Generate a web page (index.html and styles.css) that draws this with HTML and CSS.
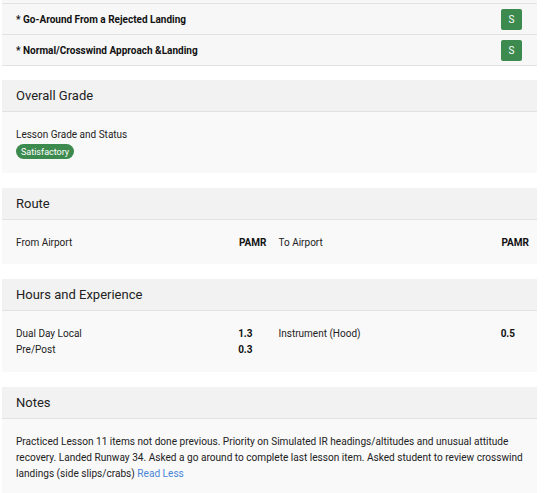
FILE: index.html
```html
<!DOCTYPE html>
<html>
<head>
<meta charset="utf-8">
<link rel="stylesheet" href="styles.css">
</head>
<body>
<div class="page">
  <div class="items">
    <div class="row-tail"></div>
    <div class="item-row">
      <span class="item-name">* Go-Around From a Rejected Landing</span>
      <span class="grade-box">S</span>
    </div>
    <div class="item-row">
      <span class="item-name">* Normal/Crosswind Approach &amp;Landing</span>
      <span class="grade-box">S</span>
    </div>
  </div>

  <section class="card">
    <div class="card-header">Overall Grade</div>
    <div class="card-body body-tall">
      <div class="label">Lesson Grade and Status</div>
      <span class="pill">Satisfactory</span>
    </div>
  </section>

  <section class="card">
    <div class="card-header">Route</div>
    <div class="card-body">
      <div class="grid">
        <div class="pair"><span class="label">From Airport</span><span class="value">PAMR</span></div>
        <div class="pair"><span class="label">To Airport</span><span class="value">PAMR</span></div>
      </div>
    </div>
  </section>

  <section class="card">
    <div class="card-header">Hours and Experience</div>
    <div class="card-body body-tall">
      <div class="grid hours">
        <div class="stack">
          <div class="pair"><span class="label">Dual Day Local</span><span class="value">1.3</span></div>
          <div class="pair"><span class="label">Pre/Post</span><span class="value">0.3</span></div>
        </div>
        <div class="stack">
          <div class="pair"><span class="label">Instrument (Hood)</span><span class="value">0.5</span></div>
        </div>
      </div>
    </div>
  </section>

  <section class="card">
    <div class="card-header">Notes</div>
    <div class="card-body">
      <p class="notes">Practiced Lesson 11 items not done previous. Priority on Simulated IR headings/altitudes and unusual attitude recovery. Landed Runway 34. Asked a go around to complete last lesson item. Asked student to review crosswind landings (side slips/crabs) <a class="link" href="#">Read Less</a></p>
    </div>
  </section>
</div>
</body>
</html>
```

FILE: styles.css
```css
* { box-sizing: border-box; }
html, body {
  margin: 0;
  padding: 0;
  background: #ffffff;
  font-family: Roboto, "Liberation Sans", Arial, sans-serif;
  color: #222222;
}
.page {
  padding: 0 14px 0 2px;
  width: 551px;
}
.items {
  margin-bottom: 14px;
}
.row-tail {
  height: 4px;
  background: #f7f7f7;
  border-bottom: 1px solid #e2e2e2;
}
.item-row {
  display: flex;
  align-items: center;
  justify-content: space-between;
  height: 31px;
  padding: 0 15px 0 14px;
  background: #f7f7f7;
  border-bottom: 1px solid #e2e2e2;
}
.item-name {
  font-size: 10px;
  font-weight: 700;
  color: #111111;
}
.grade-box {
  width: 21px;
  height: 21px;
  display: flex;
  align-items: center;
  justify-content: center;
  background: #3d8a4f;
  color: #ffffff;
  font-size: 10px;
  border-radius: 2px;
}
.card {
  margin-bottom: 15px;
  background: #f9f9f9;
}
.card-header {
  height: 32px;
  display: flex;
  align-items: center;
  padding: 0 14px;
  background: #f2f2f2;
  border-bottom: 1px solid #e2e2e2;
  font-size: 13px;
  color: #222222;
}
.card-body {
  padding: 15px 8px 13px 14px;
  font-size: 10px;
  line-height: 16px;
}
.body-tall {
  padding-bottom: 14px;
}
.label {
  color: #222222;
}
.pill {
  display: inline-flex;
  align-items: center;
  height: 15px;
  margin-top: 1px;
  padding: 0 5px;
  border-radius: 8px;
  background: #3d8a4f;
  color: #ffffff;
  font-size: 9px;
  vertical-align: top;
}
.grid {
  display: grid;
  grid-template-columns: 1fr 1fr;
  column-gap: 12px;
}
.pair {
  display: flex;
  justify-content: space-between;
}
.hours .pair {
  padding-right: 14px;
}
.value {
  font-weight: 700;
  color: #111111;
}
.notes {
  margin: 0;
  font-size: 10.1px;
  color: #222222;
}
.link {
  color: #4a86d6;
  text-decoration: none;
}
```
